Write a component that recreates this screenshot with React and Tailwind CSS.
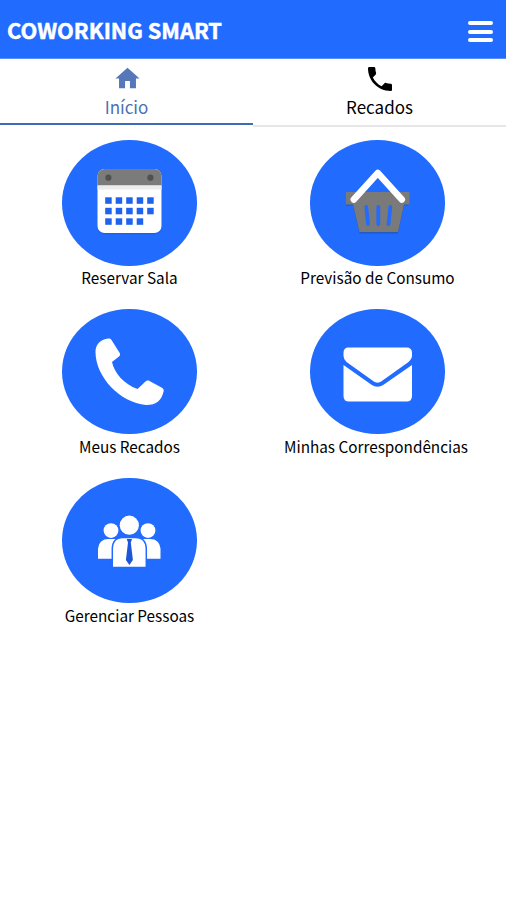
const sans = "font-['Noto_Sans_CJK_SC','Noto_Sans',sans-serif]";

const phonePath =
  'M6.62 10.79c1.44 2.83 3.76 5.14 6.59 6.59l2.2-2.2c.27-.27.67-.36 1.02-.24 1.12.37 2.33.57 3.57.57.55 0 1 .45 1 1V20c0 .55-.45 1-1 1-9.39 0-17-7.61-17-17 0-.55.45-1 1-1h3.5c.55 0 1 .45 1 1 0 1.25.2 2.45.57 3.57.11.35.03.74-.25 1.02l-2.2 2.2z';

function CalendarArt() {
  const dots = [];
  for (let row = 0; row < 3; row++) {
    for (let col = 0; col < (row === 2 ? 4 : 5); col++) {
      dots.push([43.2 + col * 10.5, 57.3 + row * 10.5]);
    }
  }
  return (
    <>
      <rect x="35.500" y="30.3" width="64" height="64" rx="7" fill="#0b4fd0" opacity=".4" />
      <rect x="35.500" y="29" width="64" height="64" rx="7" fill="#fff" />
      <path d="M35.500 45.500V36a7 7 0 0 1 7-7h50a7 7 0 0 1 7 7v9.500z" fill="#7b7b7b" />
      <rect x="35.500" y="45.500" width="64" height="4" fill="#ececec" />
      <circle cx="46.400" cy="37.7" r="3.1" fill="#505050" />
      <circle cx="88.400" cy="37.7" r="3.1" fill="#505050" />
      {dots.map(([x, y]) => (
        <rect key={`${x}-${y}`} x={x} y={y} width="6.500" height="6.500" fill="#1f62ee" />
      ))}
    </>
  );
}

function BasketArt() {
  return (
    <>
      <path d="M36 54H98.500V65.500H94L88 93.500H49.500L43 65.500H36z" fill="#2259c4" />
      <path d="M36 52H99.500V64.500H94L88 92H49.500L43 64.500H36z" fill="#7a7a7a" />
      <path d="M56.300 67L58 84M68.300 67V84M80.300 67L78.500 84" stroke="#216bff" strokeWidth="3.800" strokeLinecap="round" />
      <path d="M43.800 59.500L67.800 33L91.800 59.500" fill="none" stroke="#fff" strokeWidth="6.500" strokeLinecap="round" strokeLinejoin="round" />
    </>
  );
}

function PhoneArt() {
  return (
    <path
      d="M43.500 30C45.500 29.200 48.500 29 49.500 31L57.700 44C58.500 45.500 58.100 46.600 57 47.600L50 53C52.500 64.500 62 75 75.500 80L83.500 72.500C84.500 71.500 86 71.300 87.500 72L99.500 78.500C101 79.500 102 80.500 101.700 82C99.500 91.500 95 96 84 96C58 93.500 33.500 68 33.500 43C33.500 36 37.500 31.500 43.500 30Z"
      fill="#fff"
    />
  );
}

function MailArt() {
  return (
    <>
      <path d="M38.500 38.500H96.500Q102 38.500 102 44V47Q102 49.500 98.500 53L71.500 72.300Q67.500 75 63.500 72.300L36.500 53Q33.500 50 33.500 47V44Q33.500 38.500 38.500 38.500Z" fill="#fff" />
      <path d="M33.500 56L61.500 75.800Q67.500 79.500 73.500 75.800L102 56V87Q102 92.500 96.500 92.500H39Q33.500 92.500 33.500 87Z" fill="#fff" />
    </>
  );
}

function PeopleArt() {
  return (
    <g fill="#fff">
      <circle cx="49" cy="52.600" r="7.400" />
      <circle cx="86" cy="52.600" r="7.400" />
      <path d="M36 80.800V70.500Q37 61 46.500 61H54V80.800ZM98.500 80.800V70.500Q97.500 61 88 61H80V80.800Z" />
      <path d="M50.300 89.500V71.500Q50.300 59.500 61 59.500H73.500Q84.300 59.500 84.300 71.500V89.500Z" stroke="#216bff" strokeWidth="1.500" />
      <circle cx="67.300" cy="47.200" r="10.800" fill="#216bff" />
      <circle cx="67.300" cy="47.200" r="9.600" />
      <path d="M64.700 61H70L68.800 64.500L70.900 82L67.400 87L63.900 82L66 64.500Z" fill="#1c55d8" />
    </g>
  );
}

const items = [
  { label: 'Reservar Sala', Art: CalendarArt },
  { label: 'Previsão de Consumo', Art: BasketArt },
  { label: 'Meus Recados', Art: PhoneArt },
  { label: 'Minhas Correspondências', Art: MailArt, labelClass: 'pr-[3px]' },
  { label: 'Gerenciar Pessoas', Art: PeopleArt },
];

export default function App() {
  return (
    <div className={`flex h-[900px] w-[506px] flex-col overflow-hidden bg-white text-black ${sans}`}>
      <header className="flex h-[59px] shrink-0 items-center justify-between border-b border-[#5c8ff5] bg-[#216bff] pr-[13.500px] pl-[7px]">
        <h1 className="pt-[2px] text-[21.800px] leading-[30px] font-bold whitespace-nowrap text-white [-webkit-text-stroke:0.500px_white]">
          COWORKING SMART
        </h1>
        <button className="mt-[5px] flex w-[24.500px] flex-col gap-[4.500px]" aria-label="Menu">
          <span className="h-1 rounded-full bg-white" />
          <span className="h-1 rounded-full bg-white" />
          <span className="h-1 rounded-full bg-white" />
        </button>
      </header>

      <nav className="grid h-[68px] shrink-0 grid-cols-2 text-[17px] leading-[24px]">
        <a className="mb-[2px] flex flex-col items-center border-b-2 border-[#3e6bb8] pt-[5px] text-[#4a70b5]">
          <svg className="mb-[2px] ml-[1px] size-[29px] shrink-0" viewBox="0 0 24 24" fill="#5678b8">
            <path d="M10 20v-6h4v6h5v-8h3L12 3 2 12h3v8z" />
          </svg>
          <span>Início</span>
        </a>
        <a className="flex flex-col items-center border-b-2 border-[#e6e6e6] pt-[4px]">
          <svg className="size-[32px] shrink-0" viewBox="0 0 24 24" fill="currentColor">
            <path d={phonePath} />
          </svg>
          <span>Recados</span>
        </a>
      </nav>

      <main className="grid grid-cols-[248px_248px] pt-[13px] pl-[5.500px]">
        {items.map(({ label, Art, labelClass = '' }) => (
          <div key={label} className="flex h-[168.800px] flex-col items-center">
            <div className="h-[125.500px] w-[134.500px] shrink-0 rounded-[50%] bg-[#216bff]">
              <svg className="h-[126px] w-[134px]" viewBox="0 0 134 126">
                <Art />
              </svg>
            </div>
            <span className={`-mt-[1.500px] text-[15.300px] leading-[26px] whitespace-nowrap ${labelClass}`}>{label}</span>
          </div>
        ))}
      </main>
    </div>
  );
}
